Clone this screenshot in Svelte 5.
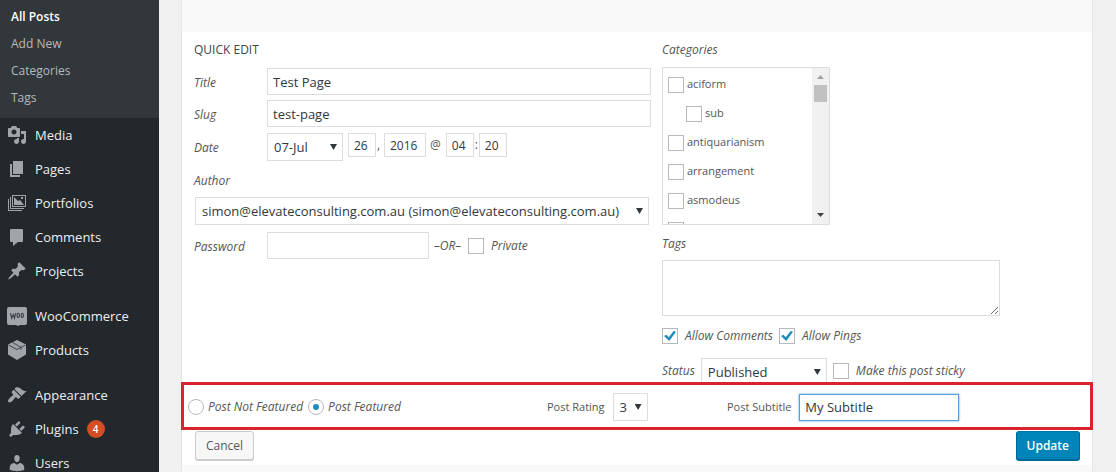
<script lang="ts">
	interface MenuItem {
		label: string
		icon: string
		count?: number
	}

	const subItems: Array<string> = ['All Posts', 'Add New', 'Categories', 'Tags']

	const menuGroups: Array<Array<MenuItem>> = [
		[
			{ label: 'Media', icon: 'media' },
			{ label: 'Pages', icon: 'pages' },
			{ label: 'Portfolios', icon: 'portfolios' },
			{ label: 'Comments', icon: 'comments' },
			{ label: 'Projects', icon: 'pin' }
		],
		[
			{ label: 'WooCommerce', icon: 'woo' },
			{ label: 'Products', icon: 'box' }
		],
		[
			{ label: 'Appearance', icon: 'brush' },
			{ label: 'Plugins', icon: 'plug', count: 4 },
			{ label: 'Users', icon: 'user' }
		]
	]

	const icons: Record<string, string> = {
		media:
			'M13 11V4c0-.55-.45-1-1-1h-1.67L9 1H5L3.67 3H2c-.55 0-1 .45-1 1v7c0 .55.45 1 1 1h10c.55 0 1-.45 1-1zM7 4.5c1.38 0 2.5 1.12 2.5 2.5S8.38 9.5 7 9.5 4.5 8.38 4.5 7 5.62 4.5 7 4.5zM14 6h5v10.5c0 1.38-1.12 2.5-2.5 2.5S14 17.88 14 16.5s1.12-2.5 2.5-2.5c.17 0 .34.02.5.05V9h-3V6zm-4 8.05V13h2v3.5c0 1.38-1.12 2.5-2.5 2.5S7 17.88 7 16.5 8.12 14 9.5 14c.17 0 .34.02.5.05z',
		pages: 'M6 15V2h10v13H6zm-1 1h8v2H3V5h2v11z',
		portfolios:
			'M5 2h14v12H5zM6 3v10h12V3zM3 4h1v11h13v1H3zM1 6h1v11h13v1H1zM7 4l4 4 2-1 4 5H7zM14 4h2v2h-2z',
		comments: 'M4 2h11q1 0 1 1v11q0 1-1 1h-4l-5 4v-4H4q-1 0-1-1V3q0-1 1-1z',
		pin: 'M10.44 3.02l1.82-1.82 6.36 6.35-1.83 1.82c-1.05-.68-2.48-.57-3.41.36l-.75.75c-.92.93-1.04 2.35-.35 3.41l-1.83 1.82-2.41-2.41-2.8 2.79c-.42.42-3.38 2.71-3.8 2.29s1.86-3.39 2.28-3.81l2.79-2.79L4.1 9.36l1.83-1.82c1.05.69 2.48.57 3.4-.36l.75-.75c.93-.92 1.05-2.35.36-3.41z',
		brush:
			'M14.48 11.06L7.41 3.99l1.5-1.5c.5-.56 2.3-.47 3.51.32 1.21.8 1.43 1.28 2.91 2.1 1.18.64 2.45 1.26 4.45.85zm-.71.71L6.7 4.7 4.93 6.47c-.39.39-.39 1.02 0 1.41l1.06 1.06c.39.39.39 1.03 0 1.42-.6.6-1.43 1.11-2.21 1.69-.35.26-.7.53-1.01.84C1.43 14.23.4 16.08 1.4 17.07c.99 1 2.84-.03 4.18-1.36.31-.31.58-.66.85-1.02.57-.78 1.08-1.61 1.69-2.21.39-.39 1.02-.39 1.41 0l1.06 1.06c.39.39 1.02.39 1.41 0z',
		plug: 'M13.11 4.36L9.87 7.6 8 5.73l3.24-3.24c.35-.34 1.05-.2 1.56.32.52.51.66 1.21.31 1.55zm-8 1.77l.91-1.12 9.01 9.01-1.19.84c-.71.71-2.63 1.16-3.82 1.16H6.14L4.9 17.26c-.59.59-1.54.59-2.12 0-.59-.58-.59-1.53 0-2.12l1.24-1.24v-3.88c0-1.13.4-3.19 1.09-3.89zm7.26 3.97l3.24-3.24c.34-.35 1.04-.21 1.55.31.52.51.66 1.21.31 1.55l-3.24 3.25z',
		user: 'M10 9.25c-2.27 0-2.73-3.44-2.73-3.44C7 4.02 7.82 2 9.97 2c2.16 0 2.98 2.02 2.71 3.81 0 0-.41 3.44-2.68 3.44zm0 2.57L12.72 10c2.39 0 4.52 2.33 4.52 4.53v2.49s-3.65 1.13-7.24 1.13c-3.65 0-7.24-1.13-7.24-1.13v-2.49c0-2.25 1.94-4.48 4.47-4.48z'
	}

	const categories: Array<{ name: string; child?: boolean }> = [
		{ name: 'aciform' },
		{ name: 'sub', child: true },
		{ name: 'antiquarianism' },
		{ name: 'arrangement' },
		{ name: 'asmodeus' },
		{ name: '' }
	]

	let title: string = $state('Test Page')
	let slug: string = $state('test-page')
	let subtitle: string = $state('My Subtitle')
	let featured: string = $state('yes')
	let allowComments: boolean = $state(true)
	let allowPings: boolean = $state(true)
</script>

<div class="admin">
	<nav class="sidebar">
		<div class="submenu">
			{#each subItems as item, i}
				<a href="#posts" class:current={i === 0}>{item}</a>
			{/each}
		</div>
		{#each menuGroups as group}
			<div class="group">
				{#each group as item}
					<a class="menuItem" href="#menu">
						<svg viewBox="0 0 20 20" width="20" height="20" aria-hidden="true">
							{#if item.icon === 'woo'}
								<path d="M2 1h16q2 0 2 2v14q0 2-2 2h-5l-2 1-2-1H2q-2 0-2-2V3q0-2 2-2z" />
								<g fill="none" stroke="#40454b" stroke-width="1.2">
									<path d="M3.5 7.2l1.200 5 1.600-3.500 1.200 3.500 1.200-5" />
									<ellipse cx="11.2" cy="9.4" rx="1.2" ry="2" />
									<ellipse cx="15.3" cy="9.4" rx="1.2" ry="2" />
								</g>
							{:else if item.icon === 'box'}
								<path d="M10 0l9 4.5v10L10 20l-9-5.500v-10z" />
								<path d="M1.500 5l8.500 4.500L18.500 5M5.500 2.500l8.500 4.800v2.500" fill="none" stroke="#40454b" stroke-width="1" />
							{:else}
								<path fill-rule={item.icon === 'portfolios' ? 'evenodd' : 'nonzero'} d={icons[item.icon]} />
							{/if}
						</svg>
						{item.label}
						{#if item.count}
							<span class="count">{item.count}</span>
						{/if}
					</a>
				{/each}
			</div>
		{/each}
	</nav>

	<main>
		<form class="panel">
			<div class="columns">
				<div class="left">
					<h4>QUICK EDIT</h4>
					<div class="field">
						<label for="title">Title</label>
						<input id="title" class="text" type="text" bind:value={title} />
					</div>
					<div class="field">
						<label for="slug">Slug</label>
						<input id="slug" class="text" type="text" bind:value={slug} />
					</div>
					<div class="field date">
						<label for="month">Date</label>
						<div class="dateParts">
							<span class="select month">
								<select id="month"><option>07-Jul</option></select>
							</span>
							<input class="small" type="text" aria-label="Day" value="26" />
							<span class="comma">,</span>
							<input class="small year" type="text" aria-label="Year" value="2016" />
							<span class="at">@</span>
							<input class="small" type="text" aria-label="Hour" value="04" />
							<span class="colon">:</span>
							<input class="small" type="text" aria-label="Minute" value="20" />
						</div>
					</div>
					<label class="authorLabel" for="author">Author</label>
					<span class="select author">
						<select id="author">
							<option>simon@elevateconsulting.com.au (simon@elevateconsulting.com.au)</option>
						</select>
					</span>
					<div class="field">
						<label for="password">Password</label>
						<div class="password">
							<input id="password" class="text" type="text" />
							<span class="or">–OR–</span>
							<label class="check"><input type="checkbox" />Private</label>
						</div>
					</div>
				</div>

				<div class="right">
					<span class="heading" id="catLabel">Categories</span>
					<div class="categories" role="group" aria-labelledby="catLabel">
						<div class="catList">
							{#each categories as category}
								<label class:child={category.child}>
									<input type="checkbox" /><span>{category.name}</span>
								</label>
							{/each}
						</div>
						<div class="scrollbar">
							<i class="up"></i>
							<i class="thumb"></i>
							<i class="down"></i>
						</div>
					</div>
					<label class="heading tagsLabel" for="tags">Tags</label>
					<textarea id="tags"></textarea>
					<div class="line">
						<label class="check"><input type="checkbox" bind:checked={allowComments} />Allow Comments</label>
						<label class="check"><input type="checkbox" bind:checked={allowPings} />Allow Pings</label>
					</div>
					<div class="status">
						<label for="status">Status</label>
						<span class="select published">
							<select id="status"><option>Published</option></select>
						</span>
						<label class="check"><input type="checkbox" />Make this post sticky</label>
					</div>
				</div>
			</div>

			<div class="custom">
				<div class="radios">
					<label><input type="radio" value="no" bind:group={featured} />Post Not Featured</label>
					<label><input type="radio" value="yes" bind:group={featured} />Post Featured</label>
				</div>
				<div class="pair">
					<label for="rating">Post Rating</label>
					<span class="select rating">
						<select id="rating"><option>3</option></select>
					</span>
				</div>
				<div class="pair">
					<label for="subtitle">Post Subtitle</label>
					<input id="subtitle" class="text active" type="text" bind:value={subtitle} />
				</div>
			</div>

			<div class="actions">
				<button type="button">Cancel</button>
				<button type="button" class="primary">Update</button>
			</div>
		</form>
	</main>
</div>

<style>
	:global(body) {
		margin: 0;
		background: #f0f0f0;
	}

	.admin {
		display: flex;
		height: 100vh;
		overflow: hidden;
		font-family: 'Open Sans', 'Noto Sans', sans-serif;
		font-size: 12px;
		line-height: 18px;
		color: #555;
	}

	.admin * {
		box-sizing: border-box;
	}

	.sidebar {
		flex: 0 0 159px;
		background: #23282d;
	}

	.submenu {
		padding: 3px 0 7px;
		background: #32373c;
	}

	.submenu a {
		display: block;
		padding-left: 11px;
		font-size: 12px;
		line-height: 27px;
		color: #b4b9be;
		text-decoration: none;
	}

	.submenu .current {
		font-weight: 600;
		color: #fff;
	}

	.group + .group {
		margin-top: 11px;
	}

	.menuItem {
		display: flex;
		align-items: center;
		gap: 8px;
		height: 34px;
		padding-left: 7px;
		font-size: 13px;
		color: #eee;
		text-decoration: none;
	}

	.menuItem svg {
		fill: #a0a5aa;
	}

	.count {
		width: 18px;
		border-radius: 9px;
		background: #d54e21;
		font-size: 10px;
		font-weight: 600;
		text-align: center;
		color: #fff;
	}

	main {
		flex: 1;
		min-width: 0;
		margin: 0 23px 0 22px;
		border: 1px solid #e5e5e5;
		border-width: 0 1px;
		background: #f9f9f9;
	}

	.panel {
		margin-top: 32px;
		padding-bottom: 5px;
		background: #fff;
	}

	.columns {
		display: grid;
		grid-template-columns: 457fr 430fr;
		gap: 11px;
		padding: 9px 0 0 12px;
	}

	h4 {
		margin: 0 0 9px;
		font-size: 12px;
		font-weight: 400;
		line-height: 18px;
		color: #444;
	}

	label,
	.heading,
	.or {
		font-style: italic;
	}

	.field {
		display: grid;
		grid-template-columns: 73px 1fr;
		align-items: center;
		margin-bottom: 5px;
	}

	.field > label {
		padding-top: 2px;
	}

	.date {
		margin-top: 6px;
	}

	.text,
	.small,
	select,
	textarea {
		margin: 0;
		border: 1px solid #ddd;
		border-radius: 0;
		background: #fff;
		font-family: inherit;
		color: #32373c;
		outline: none;
	}

	.text {
		width: 100%;
		height: 27px;
		padding: 0 5px;
		font-size: 13px;
	}

	.dateParts,
	.password,
	.line,
	.status,
	.pair,
	.radios {
		display: flex;
		align-items: center;
	}

	.dateParts {
		align-items: flex-start;
		line-height: 24px;
	}

	.small {
		width: 28px;
		height: 24px;
		margin-left: 5px;
		padding: 0 5px;
		font-size: 12px;
	}

	.year {
		width: 42px;
	}

	.comma,
	.colon {
		width: 3px;
		margin-left: 1px;
	}

	.comma + .small {
		margin-left: 4px;
	}

	.colon + .small {
		margin-left: 1px;
	}

	.at {
		margin-left: 4px;
	}

	.select {
		position: relative;
		display: block;
	}

	.select::after {
		content: '';
		position: absolute;
		top: 11px;
		right: 6px;
		width: 7px;
		height: 6px;
		background: #32373c;
		clip-path: polygon(0 0, 100% 0, 50% 100%);
		pointer-events: none;
	}

	select {
		appearance: none;
		display: block;
		width: 100%;
		height: 28px;
		padding: 0 6px;
		font-size: 13px;
	}

	.month {
		width: 76px;
	}

	.authorLabel {
		display: block;
		margin: 11px 0 7px;
	}

	.author {
		margin: 0 2px 7px 1px;
	}

	.password .text {
		width: 162px;
	}

	.or {
		margin: 0 7px 0 5px;
	}

	.check {
		display: flex;
		align-items: center;
		gap: 7px;
	}

	input[type='checkbox'],
	input[type='radio'] {
		appearance: none;
		flex: none;
		width: 16px;
		height: 16px;
		margin: 0;
		border: 1px solid #b4b9be;
		background: #fff;
	}

	input[type='checkbox']:checked::before {
		content: '';
		display: block;
		width: 12px;
		height: 10px;
		margin: 2px 1px;
		background: #1e8cbe;
		clip-path: polygon(0 50%, 20% 38%, 40% 62%, 80% 0, 100% 8%, 44% 100%);
	}

	input[type='radio'] {
		border-radius: 50%;
	}

	input[type='radio']:checked::before {
		content: '';
		display: block;
		width: 6px;
		height: 6px;
		margin: 4px;
		border-radius: 50%;
		background: #1e8cbe;
	}

	.heading {
		display: block;
	}

	.categories {
		display: flex;
		width: 168px;
		height: 158px;
		margin-top: 8px;
		border: 1px solid #ddd;
		overflow: hidden;
	}

	.catList {
		flex: 1;
		padding: 9px 0 0 5px;
		font-size: 11px;
		line-height: 14px;
	}

	.catList label {
		display: flex;
		gap: 3px;
		height: 29px;
		font-style: normal;
	}

	.catList .child {
		padding-left: 18px;
	}

	.scrollbar {
		display: flex;
		flex-direction: column;
		align-items: center;
		width: 17px;
		padding: 7px 0;
		background: #f1f1f1;
	}

	.up,
	.down {
		width: 7px;
		height: 4px;
		background: #a3a3a3;
		clip-path: polygon(50% 0, 100% 100%, 0 100%);
	}

	.down {
		margin-top: auto;
		background: #404040;
		clip-path: polygon(0 0, 100% 0, 50% 100%);
	}

	.thumb {
		width: 13px;
		height: 17px;
		margin-top: 6px;
		background: #c1c1c1;
	}

	.tagsLabel {
		margin: 10px 0 7px;
	}

	textarea {
		display: block;
		width: 338px;
		max-width: 100%;
		height: 56px;
		resize: vertical;
	}

	.line {
		gap: 6px;
		margin: 11px 0 13px;
	}

	.status {
		gap: 6px;
		align-items: flex-start;
	}

	.status label {
		margin-top: 4px;
	}

	.published {
		width: 126px;
	}

	/* highlighted row sits over the bottom edge of the status field */
	.custom {
		position: relative;
		display: grid;
		grid-template-columns: 359fr 180fr 363fr;
		align-items: center;
		height: 48px;
		margin: -4px -1px 0;
		padding: 2px 0 0 4px;
		border: 3px solid #d9232e;
		background: #fff;
	}

	.radios {
		gap: 5px;
	}

	.radios label {
		display: flex;
		align-items: center;
		gap: 4px;
	}

	.pair {
		gap: 8px;
	}

	.pair label {
		font-size: 11px;
		font-style: normal;
	}

	.rating {
		width: 35px;
	}

	.pair .text {
		width: 160px;
	}

	.active {
		border-color: #5b9dd9;
		box-shadow: 0 0 2px rgba(30, 140, 190, 0.8);
	}

	.actions {
		display: flex;
		justify-content: space-between;
		padding: 1px 12px 0 13px;
	}

	button {
		height: 29px;
		padding: 0 10px;
		border: 1px solid #ccc;
		border-radius: 3px;
		background: #f7f7f7;
		box-shadow: 0 1px 0 #ccc;
		font-family: inherit;
		font-size: 12px;
		color: #555;
	}

	.primary {
		border-color: #0073aa #006799 #006799;
		background: #0085ba;
		box-shadow: 0 1px 0 #006799;
		font-weight: 600;
		color: #fff;
	}
</style>
